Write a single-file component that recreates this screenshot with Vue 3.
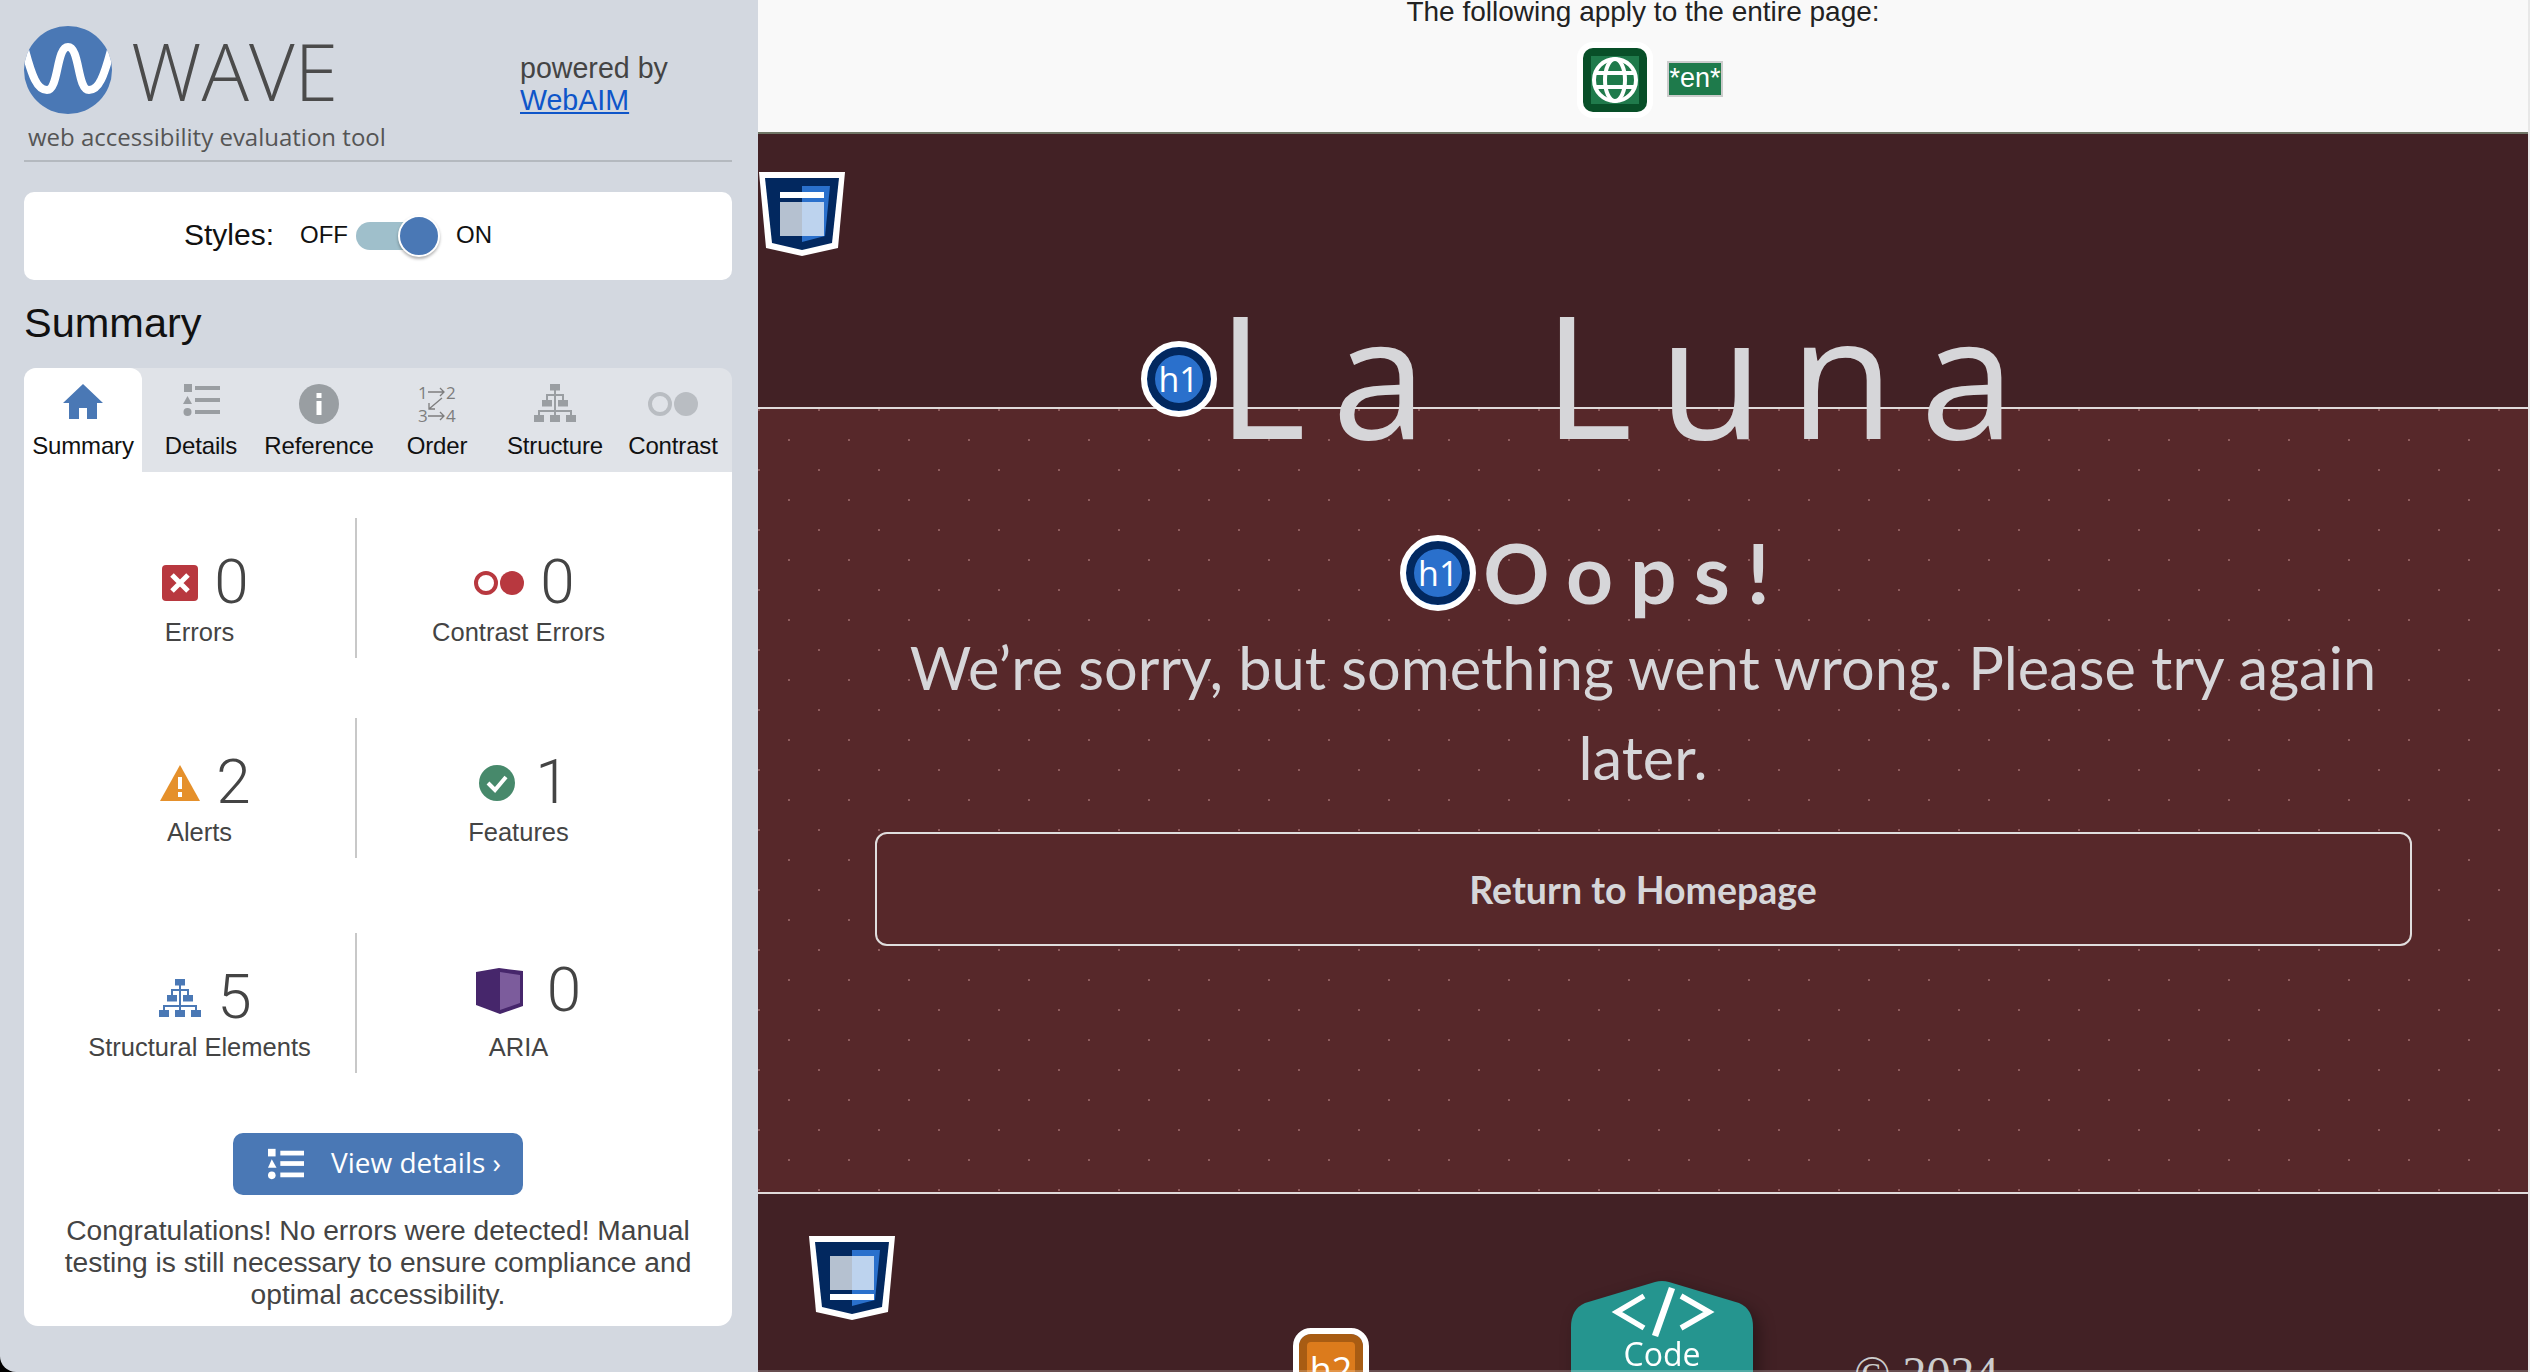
<script setup>
const tabs = ['Summary', 'Details', 'Reference', 'Order', 'Structure', 'Contrast']
</script>

<template>
  <div class="root">
    <aside class="side">
      <div class="brand">
        <div class="brand-row">
          <svg class="logo" width="88" height="88" viewBox="0 0 88 88">
            <defs><clipPath id="lc"><circle cx="44" cy="44" r="44" /></clipPath></defs>
            <circle cx="44" cy="44" r="44" fill="#4a78b5" />
            <path clip-path="url(#lc)" d="M1 24 C8 50 13 64 23 64 C35 64 32 21 44 21 C56 21 53 64 65 64 C75 64 80 50 87 24" fill="none" stroke="#fff" stroke-width="8" />
          </svg>
          <div class="wave">WAVE</div>
          <div class="powered">powered by<br /><a class="webaim">WebAIM</a></div>
        </div>
        <div class="tagline">web accessibility evaluation tool</div>
      </div>

      <div class="styles-card">
        <span class="styles-label">Styles:</span>
        <span class="off">OFF</span>
        <span class="toggle"><span class="track"></span><span class="knob"></span></span>
        <span class="on">ON</span>
      </div>

      <h2 class="sum-title">Summary</h2>

      <div class="tabs">
        <div v-for="(t, i) in tabs" :key="t" class="tab" :class="{ active: i === 0 }">
          <div class="tab-icon">
            <svg v-if="i === 0" width="40" height="35" viewBox="0 0 40 35"><path d="M20 0 L40 19 L34 19 L34 35 L24 35 L24 24 L16 24 L16 35 L6 35 L6 19 L0 19 Z" fill="#4a78b5" /></svg>
            <svg v-else-if="i === 1" width="38" height="32" viewBox="0 0 38 32" fill="#9a9ea2"><rect x="2" y="0" width="8" height="8" /><rect x="13" y="2" width="25" height="4" /><path d="M5.500 12 L10 20 L1 20 Z" /><rect x="13" y="14" width="25" height="4" /><circle cx="5.500" cy="28" r="4" /><rect x="13" y="26" width="25" height="4" /></svg>
            <svg v-else-if="i === 2" width="40" height="40" viewBox="0 0 40 40"><circle cx="20" cy="20" r="20" fill="#999ea2" /><rect x="17.500" y="9" width="5" height="5" fill="#fff" /><rect x="17.500" y="17" width="5" height="14" fill="#fff" /></svg>
            <div v-else-if="i === 3" class="order">
              <svg width="40" height="38" viewBox="0 0 40 38">
                <g fill="none" stroke="#7d7d7d" stroke-width="1.300"><path d="M11 8 H27 M23 4 L27 8 L23 12" /><path d="M11 32 H27 M23 28 L27 32 L23 36" /><path d="M25 14 L12 25 M12 19 V25 H18" /></g>
              </svg>
              <span class="ord o1">1</span><span class="ord o2">2</span><span class="ord o3">3</span><span class="ord o4">4</span>
            </div>
            <svg v-else-if="i === 4" width="42" height="38" viewBox="0 0 42 38" fill="#9a9ea2"><rect x="16" y="0" width="10" height="6.500" /><rect x="8" y="16" width="10" height="6.500" /><rect x="24" y="16" width="10" height="6.500" /><rect x="0" y="31" width="10" height="7" /><rect x="16" y="31" width="10" height="7" /><rect x="32" y="31" width="10" height="7" /><path d="M20 6 h2 v25 h-2z M12 10 h18 v6 h-2 v-4 h-14 v4 h-2z M4 26 h34 v5 h-2 v-3 h-30 v3 h-2z" /></svg>
            <svg v-else class="icon-contrast" width="50" height="24" viewBox="0 0 50 24"><circle cx="12" cy="12" r="10" fill="none" stroke="#b9bdc2" stroke-width="4" /><circle cx="38" cy="12" r="12" fill="#b9bdc2" /></svg>
          </div>
          <div class="tab-label">{{ t }}</div>
        </div>
      </div>

      <div class="panel">
        <div class="stats">
          <div class="stat left">
            <div class="top">
              <svg width="36" height="36" viewBox="0 0 36 36"><rect width="36" height="36" rx="4" fill="#b8383f" /><path d="M10 10 L26 26 M26 10 L10 26" stroke="#fff" stroke-width="5" /></svg>
              <span class="num">0</span>
            </div>
            <div class="lab">Errors</div>
          </div>
          <div class="stat right">
            <div class="top">
              <svg width="50" height="24" viewBox="0 0 50 24"><circle cx="12" cy="12" r="10" fill="none" stroke="#b8383f" stroke-width="4" /><circle cx="38" cy="12" r="12" fill="#b8383f" /></svg>
              <span class="num">0</span>
            </div>
            <div class="lab">Contrast Errors</div>
          </div>
          <div class="stat left">
            <div class="top">
              <svg width="40" height="36" viewBox="0 0 40 36"><path d="M20 0 L40 36 H0 Z" fill="#e5902b" /><rect x="18" y="12" width="4" height="12" fill="#fff" /><rect x="18" y="27" width="4" height="5" fill="#fff" /></svg>
              <span class="num">2</span>
            </div>
            <div class="lab">Alerts</div>
          </div>
          <div class="stat right">
            <div class="top features">
              <svg width="36" height="36" viewBox="0 0 36 36"><circle cx="18" cy="18" r="18" fill="#47896b" /><path d="M9 18 L16 25 L27 12" fill="none" stroke="#fff" stroke-width="4" /></svg>
              <span class="num">1</span>
            </div>
            <div class="lab">Features</div>
          </div>
          <div class="stat left third">
            <div class="top">
              <svg width="42" height="38" viewBox="0 0 42 38" fill="#4a78b5"><rect x="16" y="0" width="10" height="6.500" /><rect x="8" y="16" width="10" height="6.500" /><rect x="24" y="16" width="10" height="6.500" /><rect x="0" y="31" width="10" height="7" /><rect x="16" y="31" width="10" height="7" /><rect x="32" y="31" width="10" height="7" /><path d="M20 6 h2 v25 h-2z M12 10 h18 v6 h-2 v-4 h-14 v4 h-2z M4 26 h34 v5 h-2 v-3 h-30 v3 h-2z" /></svg>
              <span class="num">5</span>
            </div>
            <div class="lab">Structural Elements</div>
          </div>
          <div class="stat right third">
            <div class="top aria">
              <svg width="47" height="46" viewBox="0 0 47 46"><path d="M0 4 L23 0 L47 3 V38 L24 46 L0 37 Z" fill="#46266b" /><path d="M24 4 L44 7 V35 L24 42 Z" fill="#7c5c9c" /></svg>
              <span class="num">0</span>
            </div>
            <div class="lab">ARIA</div>
          </div>
        </div>

        <div class="btn-wrap">
          <div class="btn">
            <svg width="36" height="32" viewBox="0 0 38 32" fill="#fff"><rect x="0" y="0" width="8" height="8" /><rect x="13" y="2" width="25" height="5" /><path d="M4 11 L9 20 L0 20 Z" /><rect x="13" y="13" width="25" height="5" /><circle cx="4" cy="28" r="4" /><rect x="13" y="25" width="25" height="5" /></svg>
            <span class="btn-text">View details ›</span>
          </div>
        </div>

        <p class="congrats">Congratulations! No errors were detected! Manual testing is still necessary to ensure compliance and optimal accessibility.</p>
      </div>
    </aside>

    <main class="main">
      <div class="topbar">
        <div class="apply">The following apply to the entire page:</div>
        <div class="apply-icons">
          <svg width="76" height="76" viewBox="0 0 76 76">
            <rect width="76" height="76" rx="16" fill="#fff" />
            <rect x="6" y="6" width="64" height="64" rx="10" fill="#084f28" />
            <rect x="14" y="14" width="48" height="48" fill="#1f7a4b" />
            <g fill="none" stroke="#fff" stroke-width="4">
              <circle cx="38" cy="38" r="21" />
              <ellipse cx="38" cy="38" rx="10" ry="21" />
              <path d="M17 31 H59 M17 45 H59" />
            </g>
          </svg>
          <span class="en">*en*</span>
        </div>
      </div>

      <header class="hero">
        <h1 class="title">
          <span class="title-text"><span class="badge badge-title">h1</span>La Luna</span>
        </h1>
        <svg class="shield shield-top" width="86" height="84" viewBox="0 0 86 84">
          <path d="M0 0 H86 L79 76 L43 84 L7 76 Z" fill="#fff" />
          <path d="M6 6 H80 L73 71 L43 78 L13 71 Z" fill="#02285f" />
          <path d="M43 14 H71 L66 64 L43 70 Z" fill="#2a70cc" />
          <rect x="21" y="20" width="44" height="6" fill="#fff" />
          <rect x="21" y="30" width="22" height="34" fill="#b5c1d0" />
          <rect x="43" y="30" width="22" height="34" fill="#bdd3ee" />
        </svg>
      </header>

      <section class="body">
        <h2 class="oops"><span class="oops-text"><span class="badge badge-oops">h1</span>Oops!</span></h2>
        <p class="sorry">We’re sorry, but something went wrong. Please try again later.</p>
        <a class="home">Return to Homepage</a>
      </section>

      <footer class="foot">
        <div class="copyright">© 2024</div>
        <svg class="shield shield-foot" width="86" height="84" viewBox="0 0 86 84">
          <path d="M0 0 H86 L79 76 L43 84 L7 76 Z" fill="#fff" />
          <path d="M6 6 H80 L73 71 L43 78 L13 71 Z" fill="#02285f" />
          <path d="M43 14 H71 L66 64 L43 70 Z" fill="#2a70cc" />
          <rect x="21" y="20" width="22" height="34" fill="#b5c1d0" />
          <rect x="43" y="20" width="22" height="34" fill="#bdd3ee" />
          <rect x="21" y="58" width="44" height="6" fill="#fff" />
        </svg>
        <div class="h2badge"><span>h2</span></div>
        <div class="code">
          <svg class="code-bg" width="182" height="120" viewBox="0 0 182 120">
            <path d="M0 120 V46 Q0 28 14 22 L84 1 Q91 -1 98 1 L168 22 Q182 28 182 46 V120 Z" fill="#25958f" />
            <g fill="none" stroke="#fff" stroke-width="5.500">
              <path d="M73 15 L46 31 L73 47" />
              <path d="M110 15 L138 31 L110 47" />
              <path d="M101 7 L84 55" stroke-width="6.500" />
            </g>
          </svg>
          <span class="code-label">Code</span>
        </div>
        <div class="strip"></div>
      </footer>
    </main>
    <div class="edge"></div>
  </div>
</template>

<style>
html, body { margin: 0; padding: 0; overflow: hidden; background: #fff; }
</style>

<style scoped>
.root { display: flex; width: 2532px; height: 1372px; overflow: hidden; background: #000; font-family: "Liberation Sans", Arial, sans-serif; }
.side { flex: 0 0 758px; box-sizing: border-box; height: 1372px; padding: 26px 26px 0 24px; background: #d3d8e0; border-bottom-left-radius: 16px; color: #444; }
.brand { height: 136px; box-sizing: border-box; border-bottom: 2px solid #b4b9bf; }
.brand-row { display: flex; height: 88px; }
.logo { flex: none; }
.wave { margin: 1px 0 0 19px; width: 389px; font: 300 79px/88px "Open Sans", sans-serif; color: #4b4b4b; }
.powered { margin-top: 26px; font-size: 28.600px; line-height: 32px; color: #444; }
.webaim { color: #0e55c9; text-decoration: underline; }
.tagline { margin: 8px 0 0 4px; font: 400 24px/30px "Open Sans", sans-serif; color: #555; }

.styles-card { display: flex; align-items: center; box-sizing: border-box; height: 88px; margin-top: 30px; padding-left: 160px; background: #fff; border-radius: 10px; color: #111; }
.styles-label { margin-bottom: 2px; font-size: 30px; }
.off { margin: 0 0 2px 26px; font-size: 24px; }
.on { margin: 0 0 2px 16px; font-size: 24px; }
.toggle { position: relative; display: block; width: 84px; height: 42px; margin-left: 8px; }
.track { position: absolute; left: 0; top: 7px; width: 70px; height: 28px; background: #9fbfcb; border-radius: 14px; }
.knob { position: absolute; right: 0; top: 0; box-sizing: border-box; width: 42px; height: 42px; background: #4a78b5; border: 2px solid #fff; border-radius: 50%; box-shadow: 0 2px 3px rgba(0,0,0,.3); }

.sum-title { margin: 19px 0 21px; font-size: 41.500px; line-height: 48px; font-weight: 400; color: #111; }

.tabs { display: grid; grid-template-columns: repeat(6, 118px); height: 104px; background: #e0e3e8; border-radius: 12px 12px 0 0; }
.tab { display: flex; flex-direction: column; align-items: center; box-sizing: border-box; padding-top: 16px; }
.tab.active { background: #fff; border-radius: 12px 12px 0 0; }
.tab-icon { display: flex; align-items: flex-start; justify-content: center; height: 40px; }
.icon-contrast { margin-top: 8px; }
.tab-label { margin-top: 8px; font-size: 24px; line-height: 28px; color: #111; white-space: nowrap; letter-spacing: -.15px; }
.order { position: relative; width: 40px; height: 38px; }
.ord { position: absolute; font: 17px/17px "Open Sans", sans-serif; color: #7d7d7d; }
.o1 { left: 1px; top: 0; }
.o2 { left: 29px; top: 0; }
.o3 { left: 1px; top: 23px; }
.o4 { left: 29px; top: 23px; }

.panel { box-sizing: border-box; height: 854px; padding-top: 46px; background: #fff; border-radius: 0 0 14px 14px; }
.stats { display: grid; grid-template-columns: 313px 323px; grid-template-rows: 140px 140px 155px; row-gap: 60px; margin-left: 20px; }
.stat { display: flex; flex-direction: column; align-items: center; box-sizing: border-box; padding-top: 34px; }
.stat.left { border-right: 2px solid #c8c8c8; }
.stat.third { height: 140px; margin-top: 15px; }
.top { display: flex; align-items: center; gap: 16px; height: 60px; padding-left: 12px; }
.top svg { margin-top: 2px; flex: none; }
.top.aria { gap: 24px; margin-top: -7px; margin-bottom: 7px; padding-left: 20px; }
.top.features { gap: 20px; }
.num { font: 300 62px/60px Roboto, sans-serif; color: #444; }
.lab { margin-top: 5px; font-size: 25.500px; line-height: 30px; color: #444; white-space: nowrap; }

.btn-wrap { margin-top: 60px; padding-left: 209px; }
.btn { display: flex; align-items: center; gap: 27px; box-sizing: border-box; width: 290px; height: 62px; padding-left: 35px; background: #4a78b5; border-radius: 10px; color: #fff; font: 400 28px "Open Sans", sans-serif; white-space: nowrap; }
.btn-text { margin-bottom: 4px; }
.congrats { margin: 19px 30px 0; font-size: 28.200px; line-height: 32px; text-align: center; color: #444; }

.main { position: relative; flex: 0 0 1770px; height: 1372px; background: #422125; color: #d6d6d9; }
.edge { flex: 1; background: #fff; border-left: 2px solid #e8e8e8; }
.topbar { box-sizing: border-box; height: 134px; background: #f9f9f9; border-bottom: 2px solid #6f7565; text-align: center; color: #222; }
.apply { position: relative; top: -4px; font-size: 28px; line-height: 32px; }
.apply-icons { display: flex; justify-content: center; align-items: center; gap: 14px; margin-top: 10px; padding-left: 14px; }
.en { box-sizing: border-box; width: 56px; height: 36px; margin-top: -3px; background: #1e7a4b; border: 2px solid #ccc; color: #fff; font-size: 27px; line-height: 30px; white-space: nowrap; text-align: center; }

.hero { position: relative; box-sizing: border-box; height: 275px; background: #422125; border-bottom: 2px solid #e0dbdb; }
.title { display: flex; justify-content: center; margin: 0; padding-top: 139px; font: 500 171px/200px "Open Sans", sans-serif; letter-spacing: 26px; word-spacing: 20px; color: #d6d6d9; white-space: nowrap; }
.title-text { position: relative; margin-right: 28px; }
.badge { position: absolute; display: flex; align-items: center; justify-content: center; box-sizing: border-box; width: 76px; height: 76px; background: #2a70cc; border: 6px solid #fff; border-radius: 50%; box-shadow: inset 0 0 0 8px #02285f; color: #fff; font: 400 34px/1 "Open Sans", sans-serif; letter-spacing: 0; word-spacing: 0; }
.badge-title { left: -76px; top: 68px; }
.badge-oops { left: -83px; top: 13px; }
.shield { position: absolute; }
.shield-top { left: 1px; top: 38px; }

.body { display: flex; flex-direction: column; align-items: center; box-sizing: border-box; height: 785px; background-color: #57282a; border-bottom: 2px solid #e0dbdb; background-image: conic-gradient(from 270deg at 2px 2px, #8f5c5c 25%, transparent 0), conic-gradient(from 270deg at 2px 2px, #8f5c5c 25%, transparent 0); background-size: 60px 60px; background-position: 0 0, 30px 30px; }
.oops { margin: 0; padding-top: 113px; font: 700 82px/100px Lato, sans-serif; letter-spacing: 17px; color: #d6d6d9; white-space: nowrap; }
.oops-text { position: relative; display: inline-block; margin-right: 16px; }
.sorry { width: 1537px; margin: 0; font: 400 59.500px/90px Lato, sans-serif; text-align: center; color: #d6d6d9; }
.home { display: flex; align-items: center; justify-content: center; box-sizing: border-box; width: 1537px; height: 114px; margin-top: 30px; background: #57282a; border: 2px solid #e0dede; border-radius: 12px; font: 700 37.500px Lato, sans-serif; color: #d6d6d9; }

.foot { position: relative; height: 178px; }
.copyright { position: absolute; left: 1096px; top: 152px; font: 400 48px/56px "Liberation Serif", serif; color: #ccc; white-space: nowrap; }
.shield-foot { left: 51px; top: 42px; }
.h2badge { position: absolute; left: 541px; top: 140px; box-sizing: border-box; width: 64px; height: 76px; padding-top: 10px; background: #dc7b1c; border: 8px solid #a85c13; outline: 6px solid #fff; border-radius: 12px; color: #fff; font: 400 36px/1 "Open Sans", sans-serif; text-align: center; }
.code { position: absolute; left: 813px; top: 87px; width: 182px; height: 120px; filter: drop-shadow(6px 6px 8px rgba(0,0,0,.35)); color: #fff; text-align: center; }
.code-bg { position: absolute; left: 0; top: 0; }
.code-label { position: absolute; left: 0; right: 0; top: 51px; font: 400 32px/44px "Open Sans", sans-serif; }
.strip { position: absolute; left: 0; right: 0; bottom: 0; height: 2px; background: rgba(255,255,255,.2); }
</style>
